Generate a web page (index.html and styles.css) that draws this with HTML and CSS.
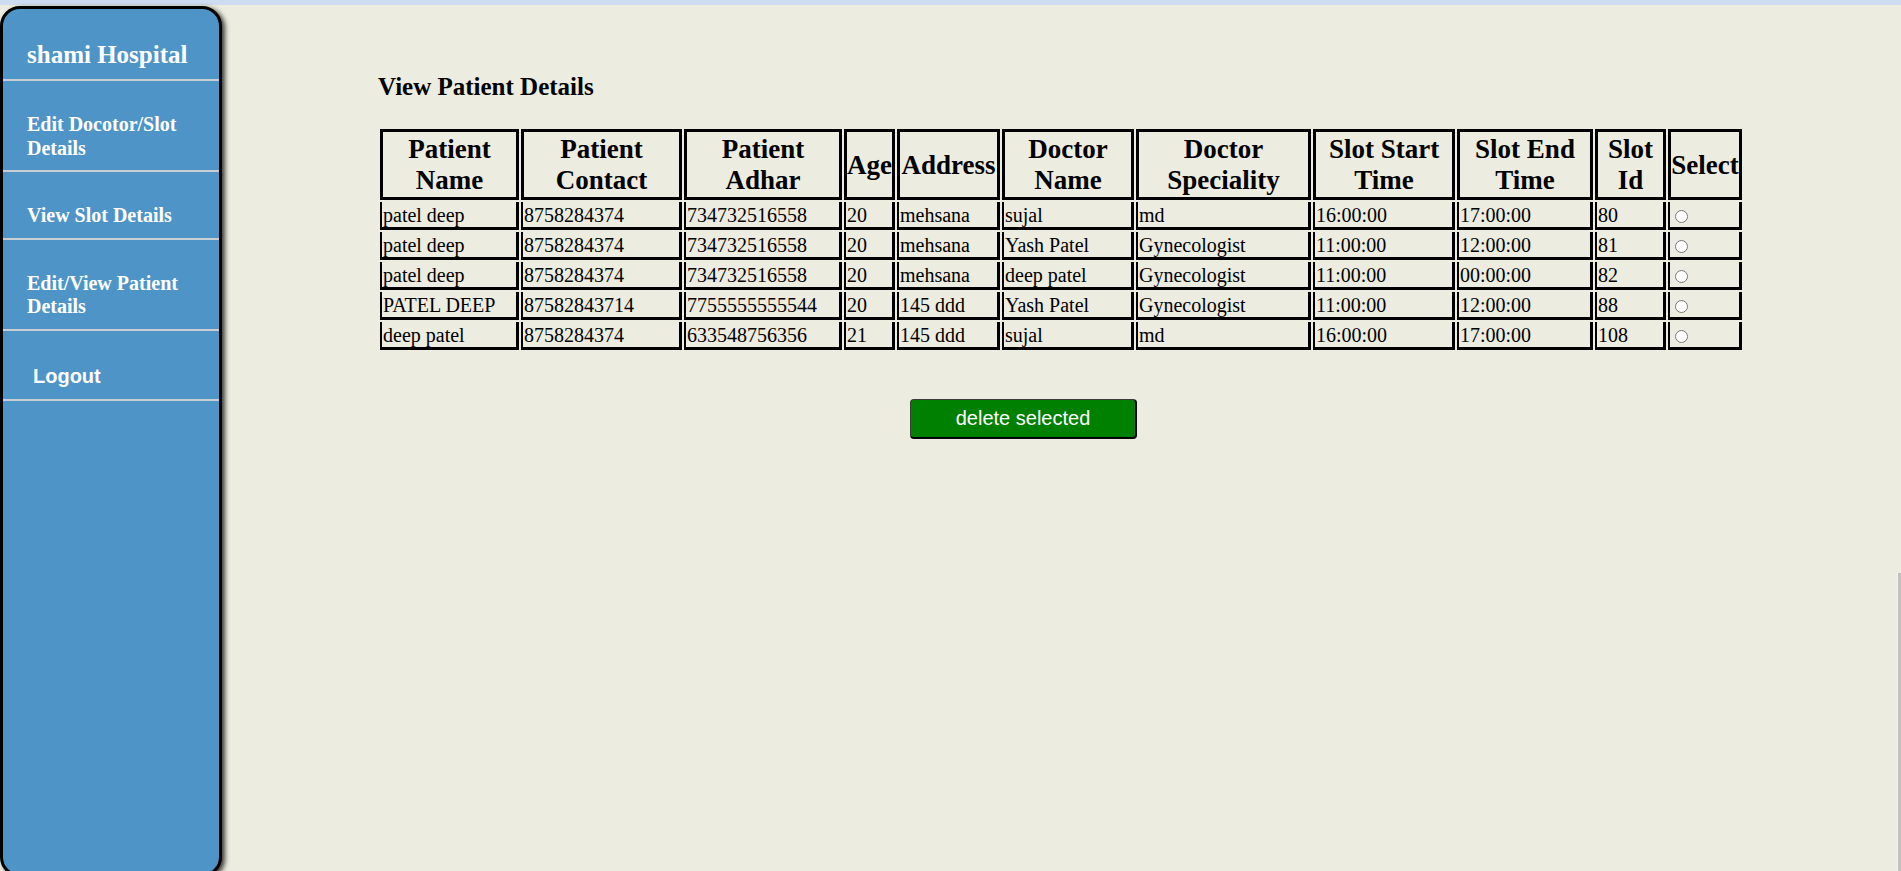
FILE: index.html
```html
<!DOCTYPE html>
<html>
<head>
<meta charset="utf-8">
<title>shami Hospital</title>
<link rel="stylesheet" href="styles.css">
</head>
<body>
<div class="topbar"></div>
<div class="layout">
  <aside class="sidebar">
    <div class="brand">shami Hospital</div>
    <a class="nav-item" href="#">Edit Docotor/Slot Details</a>
    <a class="nav-item" href="#">View Slot Details</a>
    <a class="nav-item" href="#">Edit/View Patient Details</a>
    <a class="nav-item nav-logout" href="#">Logout</a>
  </aside>
  <main class="main">
    <h3 class="title">View Patient Details</h3>
    <form class="patients-form">
      <table class="patients">
        <colgroup>
          <col class="c-name"><col class="c-contact"><col class="c-adhar"><col class="c-age"><col class="c-address"><col class="c-doc"><col class="c-spec"><col class="c-start"><col class="c-end"><col class="c-id"><col class="c-select">
        </colgroup>
        <thead>
          <tr>
            <th>Patient Name</th><th>Patient Contact</th><th>Patient Adhar</th><th>Age</th><th>Address</th><th>Doctor Name</th><th>Doctor Speciality</th><th>Slot Start Time</th><th>Slot End Time</th><th>Slot Id</th><th>Select</th>
          </tr>
        </thead>
        <tbody>
          <tr><td>patel deep</td><td>8758284374</td><td>734732516558</td><td>20</td><td>mehsana</td><td>sujal</td><td>md</td><td>16:00:00</td><td>17:00:00</td><td>80</td><td><input type="radio" name="sel" value="80"></td></tr>
          <tr><td>patel deep</td><td>8758284374</td><td>734732516558</td><td>20</td><td>mehsana</td><td>Yash Patel</td><td>Gynecologist</td><td>11:00:00</td><td>12:00:00</td><td>81</td><td><input type="radio" name="sel" value="81"></td></tr>
          <tr><td>patel deep</td><td>8758284374</td><td>734732516558</td><td>20</td><td>mehsana</td><td>deep patel</td><td>Gynecologist</td><td>11:00:00</td><td>00:00:00</td><td>82</td><td><input type="radio" name="sel" value="82"></td></tr>
          <tr><td>PATEL DEEP</td><td>87582843714</td><td>7755555555544</td><td>20</td><td>145 ddd</td><td>Yash Patel</td><td>Gynecologist</td><td>11:00:00</td><td>12:00:00</td><td>88</td><td><input type="radio" name="sel" value="88"></td></tr>
          <tr><td>deep patel</td><td>8758284374</td><td>633548756356</td><td>21</td><td>145 ddd</td><td>sujal</td><td>md</td><td>16:00:00</td><td>17:00:00</td><td>108</td><td><input type="radio" name="sel" value="108"></td></tr>
        </tbody>
      </table>
      <div class="actions">
        <button type="button" class="btn-delete">delete selected</button>
      </div>
    </form>
  </main>
</div>
<div class="scroll-thumb"></div>
</body>
</html>
```

FILE: styles.css
```css
html, body {
  margin: 0;
  padding: 0;
  height: 100%;
  overflow: hidden;
}
body {
  background: #ecece0;
  font-family: "Liberation Serif", "Times New Roman", serif;
  color: #000;
}
.topbar {
  height: 5px;
  background: #cddcf1;
}
.layout {
  display: flex;
  align-items: flex-start;
}
.sidebar {
  flex: none;
  box-sizing: border-box;
  width: 222px;
  height: 871px;
  margin-top: 1px;
  background: #4e94c7;
  border: 3px solid #000;
  border-radius: 20px;
  box-shadow: 3px 2px 5px rgba(0, 0, 0, 0.75);
  display: flex;
  flex-direction: column;
}
.brand {
  padding: 32px 0 10px 24px;
  font-size: 25px;
  font-weight: bold;
  color: #fff;
  border-bottom: 2px solid #c9ced4;
}
.nav-item {
  display: block;
  padding: 32px 8px 10px 24px;
  font-size: 20px;
  line-height: 23.5px;
  font-weight: bold;
  color: #fff;
  text-decoration: none;
  border-bottom: 2px solid #c9ced4;
}
.nav-logout {
  font-family: "Liberation Sans", Arial, sans-serif;
  line-height: 23px;
  padding: 34px 8px 11px 30px;
}
.main {
  flex: 1;
  padding: 68px 0 0 156px;
}
.title {
  margin: 0;
  font-size: 25px;
  font-weight: bold;
  line-height: normal;
}
.patients-form {
  margin: 0;
}
.patients {
  margin-top: 26px;
  table-layout: fixed;
  width: 1366px;
  border-collapse: separate;
  border-spacing: 2px;
}
.c-name { width: 139px; }
.c-contact { width: 161px; }
.c-adhar { width: 158px; }
.c-age { width: 51px; }
.c-address { width: 103px; }
.c-doc { width: 132px; }
.c-spec { width: 175px; }
.c-start { width: 142px; }
.c-end { width: 136px; }
.c-id { width: 71px; }
.c-select { width: 74px; }
.patients th {
  box-sizing: border-box;
  border: 3px solid #000;
  padding: 2px 0 1px;
  font-size: 27px;
  line-height: 31px;
  font-weight: bold;
  text-align: center;
  vertical-align: middle;
}
.patients td {
  box-sizing: border-box;
  border-left: 2px solid #000;
  border-right: 3px solid #000;
  border-bottom: 3px solid #000;
  border-top: 0;
  padding: 2px 1px 0 1px;
  font-size: 20px;
  line-height: 23px;
  text-align: left;
  vertical-align: middle;
  white-space: nowrap;
  overflow: hidden;
}
.patients input[type="radio"] {
  width: 13px;
  height: 13px;
  margin: 3px 3px 0 4px;
  vertical-align: -1px;
}
.actions {
  margin-top: 47px;
  padding-left: 532px;
}
.btn-delete {
  box-sizing: border-box;
  width: 227px;
  height: 40px;
  background: #008000;
  color: #fff;
  font-family: "Liberation Sans", Arial, sans-serif;
  font-size: 20px;
  border-width: 1px 2px 2px 1px;
  border-style: solid;
  border-color: #3b3b3b #000 #000 #3b3b3b;
  border-radius: 4px;
  padding: 0;
  cursor: pointer;
}
.scroll-thumb {
  position: fixed;
  right: 0;
  top: 573px;
  bottom: 0;
  width: 3px;
  background: #c1c1c1;
  border-left: 1px solid #f1f1f1;
}
```
